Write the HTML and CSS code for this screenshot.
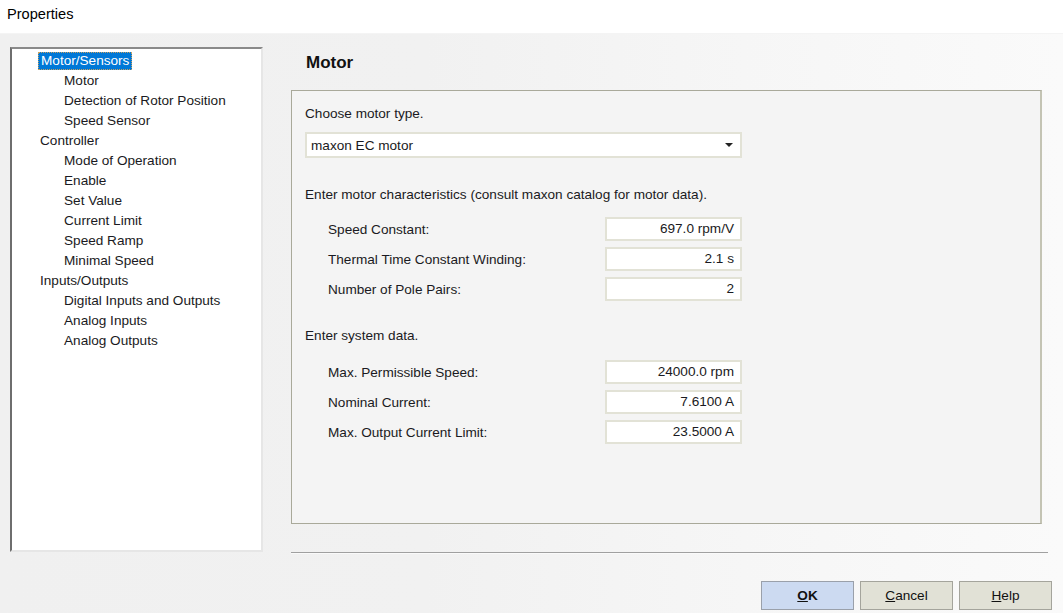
FILE: index.html
```html
<!DOCTYPE html>
<html>
<head>
<meta charset="utf-8">
<link rel="stylesheet" href="styles.css">
</head>
<body>
<div class="window">
  <div class="titlebar">Properties</div>
  <div class="content">
    <div class="left">
      <ul class="tree">
        <li class="l0"><span class="sel">Motor/Sensors</span></li>
        <li class="l1">Motor</li>
        <li class="l1">Detection of Rotor Position</li>
        <li class="l1">Speed Sensor</li>
        <li class="l0">Controller</li>
        <li class="l1">Mode of Operation</li>
        <li class="l1">Enable</li>
        <li class="l1">Set Value</li>
        <li class="l1">Current Limit</li>
        <li class="l1">Speed Ramp</li>
        <li class="l1">Minimal Speed</li>
        <li class="l0">Inputs/Outputs</li>
        <li class="l1">Digital Inputs and Outputs</li>
        <li class="l1">Analog Inputs</li>
        <li class="l1">Analog Outputs</li>
      </ul>
    </div>
    <div class="right">
      <h1 class="heading">Motor</h1>
      <div class="group">
        <p class="text">Choose motor type.</p>
        <div class="select"><span>maxon EC motor</span><span class="arrow"></span></div>
        <p class="text sec1">Enter motor characteristics (consult maxon catalog for motor data).</p>
        <div class="rows first">
          <div class="row"><span class="label">Speed Constant:</span><span class="field">697.0 rpm/V</span></div>
          <div class="row"><span class="label">Thermal Time Constant Winding:</span><span class="field">2.1 s</span></div>
          <div class="row"><span class="label">Number of Pole Pairs:</span><span class="field">2</span></div>
        </div>
        <p class="text sec2">Enter system data.</p>
        <div class="rows second">
          <div class="row"><span class="label">Max. Permissible Speed:</span><span class="field">24000.0 rpm</span></div>
          <div class="row"><span class="label">Nominal Current:</span><span class="field">7.6100 A</span></div>
          <div class="row"><span class="label">Max. Output Current Limit:</span><span class="field">23.5000 A</span></div>
        </div>
      </div>
      <div class="separator"></div>
    </div>
  </div>
  <div class="footer">
    <button class="btn ok"><u>O</u>K</button>
    <button class="btn"><u>C</u>ancel</button>
    <button class="btn"><u>H</u>elp</button>
  </div>
</div>
</body>
</html>
```
FILE: styles.css
```css
* { box-sizing: border-box; }
html, body { margin: 0; padding: 0; }
body {
  width: 1063px;
  height: 613px;
  overflow: hidden;
  font-family: "Liberation Sans", Arial, sans-serif;
  font-size: 13.6px;
  color: #1a1a22;
  background: #f0f0f0;
}
.window {
  display: flex;
  flex-direction: column;
  height: 613px;
  background: linear-gradient(to right, #f0f0f0 0%, #f1f1f1 40%, #f6f6f6 70%, #fafafa 100%);
}
.titlebar {
  height: 34px;
  background: #ffffff;
  padding: 6px 0 0 7px;
  font-size: 14.6px;
  color: #000;
  border-bottom: 1px solid #f4f4f4;
}
.content {
  display: flex;
  height: 532px;
}
.left {
  padding: 13px 0 0 10px;
  width: 291px;
}
.tree {
  list-style: none;
  margin: 0;
  padding: 2px 0 0 0;
  width: 253px;
  height: 505px;
  background: #fff;
  border-top: 2px solid #8a8a8a;
  border-left: 2px solid #6e6e6e;
  border-right: 2px solid #e6e6e6;
  border-bottom: 2px solid #e6e6e6;
}
.tree li {
  height: 20px;
  line-height: 20px;
  white-space: nowrap;
}
.tree .l0 { padding-left: 28px; }
.tree .l1 { padding-left: 52px; }
.tree .sel {
  display: inline-block;
  margin-left: -2px;
  padding: 0 2px;
  height: 18px;
  line-height: 16px;
  background: #0078d7;
  color: #fff;
  border: 1px dotted #c8a060;
}
.right {
  display: flex;
  flex-direction: column;
  width: 760px;
}
.heading {
  margin: 19px 0 0 15px;
  font-size: 17px;
  line-height: 19px;
  font-weight: bold;
  color: #111;
}
.group {
  margin-top: 18px;
  width: 751px;
  height: 434px;
  border: 1px solid #a9a99a;
  border-right-width: 2px;
  border-right-color: #c4c4b4;
  padding: 15px 0 0 13px;
  background: #f4f4f4;
}
.text {
  margin: 0;
  line-height: 16px;
  height: 16px;
  white-space: nowrap;
}
.select {
  margin-top: 10px;
  width: 437px;
  height: 26px;
  background: #fff;
  border: 2px solid #e2e2d6;
  display: flex;
  align-items: center;
  justify-content: space-between;
  padding: 0 7px 0 4px;
}
.arrow {
  width: 0;
  height: 0;
  border-left: 4px solid transparent;
  border-right: 4px solid transparent;
  border-top: 4px solid #222;
}
.sec1 { margin-top: 29px; }
.sec2 { margin-top: 27px; }
.rows {
  display: flex;
  flex-direction: column;
  gap: 6px;
  width: 437px;
}
.rows.first { margin-top: 14px; }
.rows.second { margin-top: 16px; }
.row {
  display: flex;
  justify-content: space-between;
  align-items: center;
  height: 24px;
  padding-left: 23px;
}
.field {
  width: 137px;
  height: 24px;
  background: #fff;
  border: 2px solid #e2e2d6;
  text-align: right;
  padding: 0 6px 0 0;
  line-height: 20px;
}
.separator {
  margin-top: 28px;
  width: 757px;
  height: 2px;
  border-top: 1px solid #a0a0a0;
  border-bottom: 1px solid #fafafa;
}
.footer {
  display: flex;
  justify-content: flex-end;
  gap: 6px;
  padding: 15px 11px 0 0;
}
.btn {
  width: 93px;
  height: 29px;
  font-family: "Liberation Sans", Arial, sans-serif;
  font-size: 13.6px;
  color: #111;
  background: #e1e1d6;
  border: 1px solid #a4a49c;
  padding: 0;
}
.btn.ok {
  background: #ccdaf1;
  border-color: #9aa0aa;
  font-weight: bold;
}
```
